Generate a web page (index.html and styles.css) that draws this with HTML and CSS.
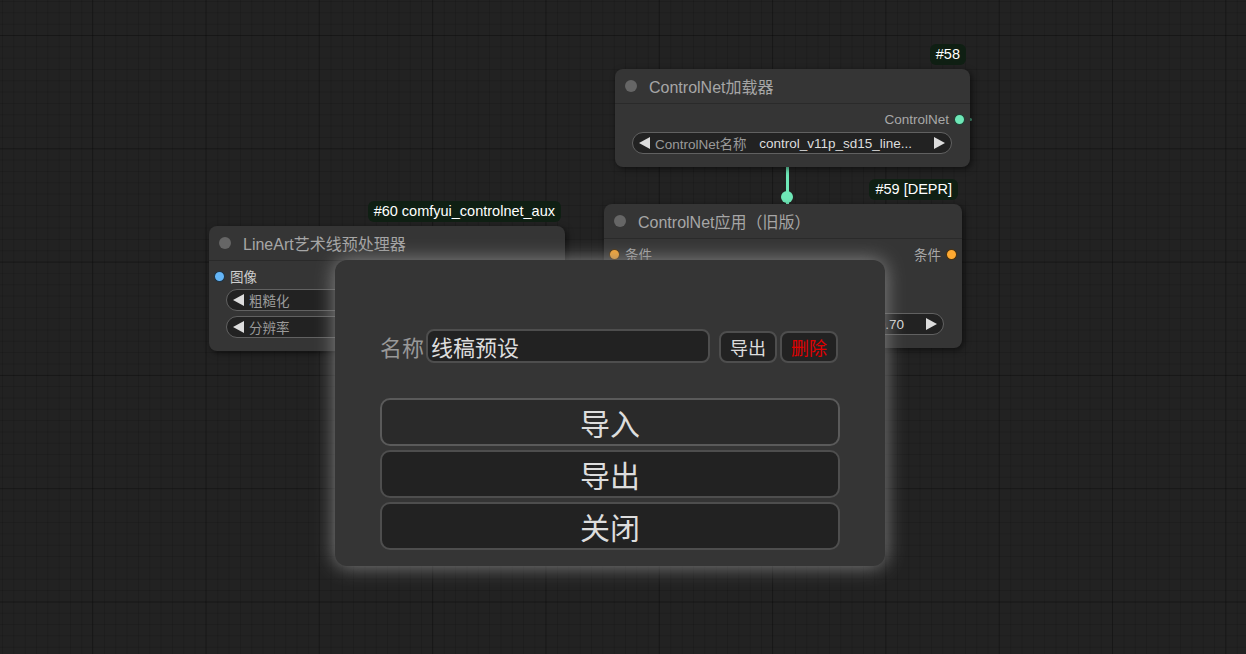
FILE: index.html
```html
<!DOCTYPE html>
<html lang="zh">
<head>
<meta charset="utf-8">
<title>ComfyUI</title>
<link rel="stylesheet" href="styles.css">
</head>
<body>
<div class="canvas">
  <div class="link-line"></div>
  <div class="link-dot"></div>
  <div class="link-stub"></div>

  <div class="node n58">
    <div class="badge">#58</div>
    <div class="node-title"><span class="title-dot"></span><span class="title-text">ControlNet加载器</span></div>
    <div class="node-body">
      <div class="slot-row">
        <span class="slot in"></span>
        <span class="slot out">ControlNet<i class="dot teal"></i></span>
      </div>
      <div class="widget">
        <span class="tri-left"></span><span class="w-label">ControlNet名称</span>
        <span class="w-value">control_v11p_sd15_line...</span><span class="tri-right"></span>
      </div>
    </div>
  </div>

  <div class="node n59">
    <div class="badge">#59 [DEPR]</div>
    <div class="node-title"><span class="title-dot"></span><span class="title-text">ControlNet应用（旧版）</span></div>
    <div class="node-body">
      <div class="slot-row">
        <span class="slot in"><i class="dot orange"></i>条件</span>
        <span class="slot out">条件<i class="dot orange"></i></span>
      </div>
      <div class="slot-row">
        <span class="slot in"><i class="dot teal"></i>ControlNet</span>
      </div>
      <div class="slot-row">
        <span class="slot in"><i class="dot blue"></i>图像</span>
      </div>
      <div class="widget widget-gap">
        <span class="tri-left"></span><span class="w-label">强度</span>
        <span class="w-value">0.70</span><span class="tri-right"></span>
      </div>
    </div>
  </div>

  <div class="node n60">
    <div class="badge">#60 comfyui_controlnet_aux</div>
    <div class="node-title"><span class="title-dot"></span><span class="title-text">LineArt艺术线预处理器</span></div>
    <div class="node-body">
      <div class="slot-row">
        <span class="slot in"><i class="dot blue"></i><span class="bright">图像</span></span>
        <span class="slot out">图像<i class="dot blue"></i></span>
      </div>
      <div class="widget">
        <span class="tri-left"></span><span class="w-label">粗糙化</span>
        <span class="w-value">disable</span><span class="tri-right"></span>
      </div>
      <div class="widget widget-next">
        <span class="tri-left"></span><span class="w-label">分辨率</span>
        <span class="w-value">512</span><span class="tri-right"></span>
      </div>
    </div>
  </div>

  <div class="modal">
    <div class="name-row">
      <span class="name-label">名称</span>
      <input class="name-input" type="text" value="线稿预设">
      <button class="small-btn">导出</button>
      <button class="small-btn danger">删除</button>
    </div>
    <div class="big-btns">
      <button class="big-btn hover">导入</button>
      <button class="big-btn">导出</button>
      <button class="big-btn">关闭</button>
    </div>
  </div>
</div>
</body>
</html>
```

FILE: styles.css
```css
html, body {
  margin: 0;
  padding: 0;
}

body {
  width: 1246px;
  height: 654px;
  overflow: hidden;
  font-family: "Liberation Sans", "Noto Sans CJK SC", sans-serif;
  background-color: #222222;
  background-image:
    linear-gradient(to right, rgba(0, 0, 0, 0.24) 1px, transparent 1px),
    linear-gradient(to bottom, rgba(0, 0, 0, 0.24) 1px, transparent 1px),
    linear-gradient(to right, rgba(0, 0, 0, 0.12) 1px, transparent 1px),
    linear-gradient(to bottom, rgba(0, 0, 0, 0.12) 1px, transparent 1px);
  background-size: 113.33px 113.33px, 113.33px 113.33px, 11.333px 11.333px, 11.333px 11.333px;
  background-position: 92px 35px, 92px 35px, 2px 1px, 2px 1px;
}

.canvas {
  position: relative;
  width: 1246px;
  height: 654px;
}

/* links */
.link-line {
  position: absolute;
  left: 786px;
  top: 160px;
  width: 3px;
  height: 44px;
  background: #6ee7b7;
}
.link-dot {
  position: absolute;
  left: 781px;
  top: 191px;
  width: 12px;
  height: 12px;
  border-radius: 50%;
  background: #6ee7b7;
}
.link-stub {
  position: absolute;
  left: 969px;
  top: 118px;
  width: 3px;
  height: 3px;
  border-radius: 50%;
  background: #4fa886;
}

/* nodes */
.node {
  position: absolute;
  background: #353535;
  border-radius: 8px;
  box-shadow: 2px 2px 6px rgba(0, 0, 0, 0.55);
}
.n58 { left: 615px; top: 69px; width: 355px; }
.n59 { left: 604px; top: 204px; width: 358px; }
.n60 { left: 209px; top: 226px; width: 356px; }

.badge {
  position: absolute;
  right: 4px;
  bottom: calc(100% + 4px);
  height: 21px;
  line-height: 21px;
  padding: 0 6px;
  border-radius: 6px;
  background: #0f1f13;
  color: #ffffff;
  font-size: 14.5px;
  white-space: nowrap;
}

.node-title {
  height: 34px;
  border-bottom: 1px solid #2a2a2a;
  display: flex;
  align-items: center;
  padding-left: 10px;
}
.title-dot {
  width: 12px;
  height: 12px;
  border-radius: 50%;
  background: #666666;
  margin-right: 12px;
  flex: none;
}
.title-text {
  font-size: 16px;
  color: #a6a6a6;
  white-space: nowrap;
}

.node-body {
  padding: 5px 0 13px;
}
.slot-row {
  height: 20px;
  display: flex;
  justify-content: space-between;
  align-items: center;
  font-size: 13.5px;
  color: #a8a8a8;
}
.slot {
  display: flex;
  align-items: center;
  gap: 5px;
  white-space: nowrap;
}
.slot.in { padding-left: 5px; }
.slot.out { padding-right: 5px; }
.bright { color: #cfcfcf; }

.dot {
  display: block;
  width: 11px;
  height: 11px;
  border-radius: 50%;
  box-sizing: border-box;
  border: 1px solid rgba(0, 0, 0, 0.7);
}
.dot.teal { background: #6ee7b7; }
.dot.orange { background: #ffa931; }
.dot.blue { background: #64b5f6; }

.widget {
  height: 22px;
  margin: 3px 18px 0 17px;
  box-sizing: border-box;
  border: 1px solid #616161;
  border-radius: 11px;
  background: #222222;
  display: flex;
  align-items: center;
  padding: 0 6px;
  font-size: 13.5px;
  white-space: nowrap;
}
.widget-gap { margin-top: 9px; }
.widget-next { margin-top: 5px; }

.tri-left {
  width: 0;
  height: 0;
  border-top: 6px solid transparent;
  border-bottom: 6px solid transparent;
  border-right: 11px solid #dddddd;
  flex: none;
}
.tri-right {
  width: 0;
  height: 0;
  border-top: 6px solid transparent;
  border-bottom: 6px solid transparent;
  border-left: 11px solid #dddddd;
  flex: none;
}
.w-label {
  color: #9a9a9a;
  margin-left: 5px;
}
.w-value {
  margin-left: auto;
  margin-right: 22px;
  color: #dddddd;
}

/* modal */
.modal {
  position: absolute;
  left: 335px;
  top: 260px;
  width: 550px;
  height: 306px;
  box-sizing: border-box;
  padding: 69px 45px 0 45px;
  background: #353535;
  border-radius: 12px;
  box-shadow: 0 0 20px #888888;
  font-family: "Noto Sans CJK SC", "Liberation Sans", sans-serif;
}

.name-row {
  display: flex;
  align-items: flex-end;
  height: 34px;
}
.name-label {
  font-size: 22px;
  line-height: 34px;
  color: #999999;
  margin-right: 2px;
  align-self: center;
}
.name-input {
  width: 284px;
  height: 34px;
  box-sizing: border-box;
  border: 2px solid #4e4e4e;
  border-radius: 8px;
  background: #222222;
  color: #dddddd;
  font-family: inherit;
  font-size: 22px;
  padding: 0 3px;
  margin: 0;
  outline: none;
}
.small-btn {
  width: 58px;
  height: 32px;
  box-sizing: border-box;
  border: 2px solid #4e4e4e;
  border-radius: 8px;
  background: #222222;
  color: #dddddd;
  font-family: inherit;
  font-size: 18px;
  padding: 0;
  margin: 0 0 0 9px;
  line-height: 28px;
}
.small-btn.danger {
  margin-left: 3px;
  color: #e00000;
}

.big-btns {
  margin-top: 35px;
  display: flex;
  flex-direction: column;
  gap: 4px;
}
.big-btn {
  width: 100%;
  height: 48px;
  box-sizing: border-box;
  border: 2px solid #4e4e4e;
  border-radius: 10px;
  background: #222222;
  color: #dddddd;
  font-family: inherit;
  font-size: 30px;
  padding: 0;
  margin: 0;
  line-height: 44px;
}
.big-btn.hover {
  background: #2a2a2a;
  border-color: #5a5a5a;
}
```
